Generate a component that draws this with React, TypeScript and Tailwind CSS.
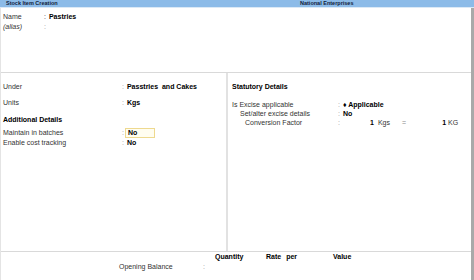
export default function App() {
  return (
    <div className="flex h-[280px] w-[474px] flex-col overflow-hidden bg-white font-['Liberation_Sans',Arial,sans-serif] text-[7px] text-[#333]">
      {/* title bar */}
      <div className="flex h-[7px] shrink-0 items-center bg-[#8cbbe8] text-[5.5px] font-bold leading-[7px] text-[#10203a]">
        <div className="w-[300px] pl-[6px]">Stock Item Creation</div>
        <div>National Enterprises</div>
      </div>

      <div className="flex flex-1 border-t border-[#dbe9f6]">
        <div className="flex flex-1 flex-col border-l border-[#e4e4e4]">
          {/* name block */}
          <div className="h-[65px] shrink-0 border-b border-[#d9d9d9] pl-[2px] pt-[4px]">
            <div className="flex leading-[10px]">
              <span className="w-[41px]">Name</span>
              <span>:</span>
              <span className="pl-[3px] font-bold text-black">Pastries</span>
            </div>
            <div className="flex leading-[10px]">
              <span className="w-[41px] italic">(alias)</span>
              <span className="text-[#999]">:</span>
            </div>
          </div>

          {/* details */}
          <div className="flex h-[179px] shrink-0 border-b border-[#d9d9d9]">
            <div className="w-[227px] shrink-0 border-r-2 border-[#e2e2e2] pl-[2px] pt-[9px]">
              <Row label="Under" value="Passtries  and Cakes" />
              <div className="mt-[6px]">
                <Row label="Units" value="Kgs" />
              </div>
              <div className="mt-[7px] font-bold leading-[10px] text-black">Additional Details</div>
              <div className="mt-[3px] flex leading-[9px]">
                <span className="w-[119px]">Maintain in batches</span>
                <span className="text-[#999]">:</span>
                <span className="ml-[1px] h-[10px] w-[30px] border border-[#eed98f] bg-[#fffdf0] pl-[2px] font-bold leading-[8px] text-black">
                  No
                </span>
              </div>
              <div className="flex leading-[9px]">
                <span className="w-[119px]">Enable cost tracking</span>
                <span className="text-[#999]">:</span>
                <span className="pl-[3px] font-bold text-black">No</span>
              </div>
            </div>

            <div className="flex-1 pl-[4px] pt-[9px]">
              <div className="font-bold leading-[10px] text-black">Statutory Details</div>
              <div className="mt-[8px] flex leading-[9px]">
                <span className="w-[106px]">Is Excise applicable</span>
                <span className="text-[#999]">:</span>
                <span className="pl-[3px] font-bold text-black">♦ Applicable</span>
              </div>
              <div className="flex leading-[9px]">
                <span className="w-[106px] pl-[8px]">Set/alter excise details</span>
                <span className="text-[#999]">:</span>
                <span className="pl-[3px] font-bold text-black">No</span>
              </div>
              <div className="flex leading-[9px]">
                <span className="w-[106px] pl-[13px]">Conversion Factor</span>
                <span className="text-[#999]">:</span>
                <span className="w-[34px] text-right font-bold text-black">1</span>
                <span className="ml-[4px] w-[24px]">Kgs</span>
                <span className="text-[#888]">=</span>
                <span className="w-[40px] text-right font-bold text-black">1</span>
                <span className="ml-[2px]">KG</span>
              </div>
            </div>
          </div>

          {/* opening balance */}
          <div className="flex-1">
            <div className="flex font-bold leading-[10px] text-black">
              <span className="w-[214px]" />
              <span className="w-[51px]">Quantity</span>
              <span className="w-[67px]">
                Rate<span className="ml-[5px]">per</span>
              </span>
              <span>Value</span>
            </div>
            <div className="flex leading-[10px]">
              <span className="w-[202px] pl-[118px]">Opening Balance</span>
              <span className="text-[#999]">:</span>
            </div>
          </div>
        </div>
        <div className="w-[3.5px] shrink-0 bg-[#a9a9a9]" />
      </div>
    </div>
  );
}

function Row({ label, value }: { label: string; value: string }) {
  return (
    <div className="flex leading-[10px]">
      <span className="w-[119px]">{label}</span>
      <span className="text-[#999]">:</span>
      <span className="whitespace-pre pl-[3px] font-bold text-black">{value}</span>
    </div>
  );
}
